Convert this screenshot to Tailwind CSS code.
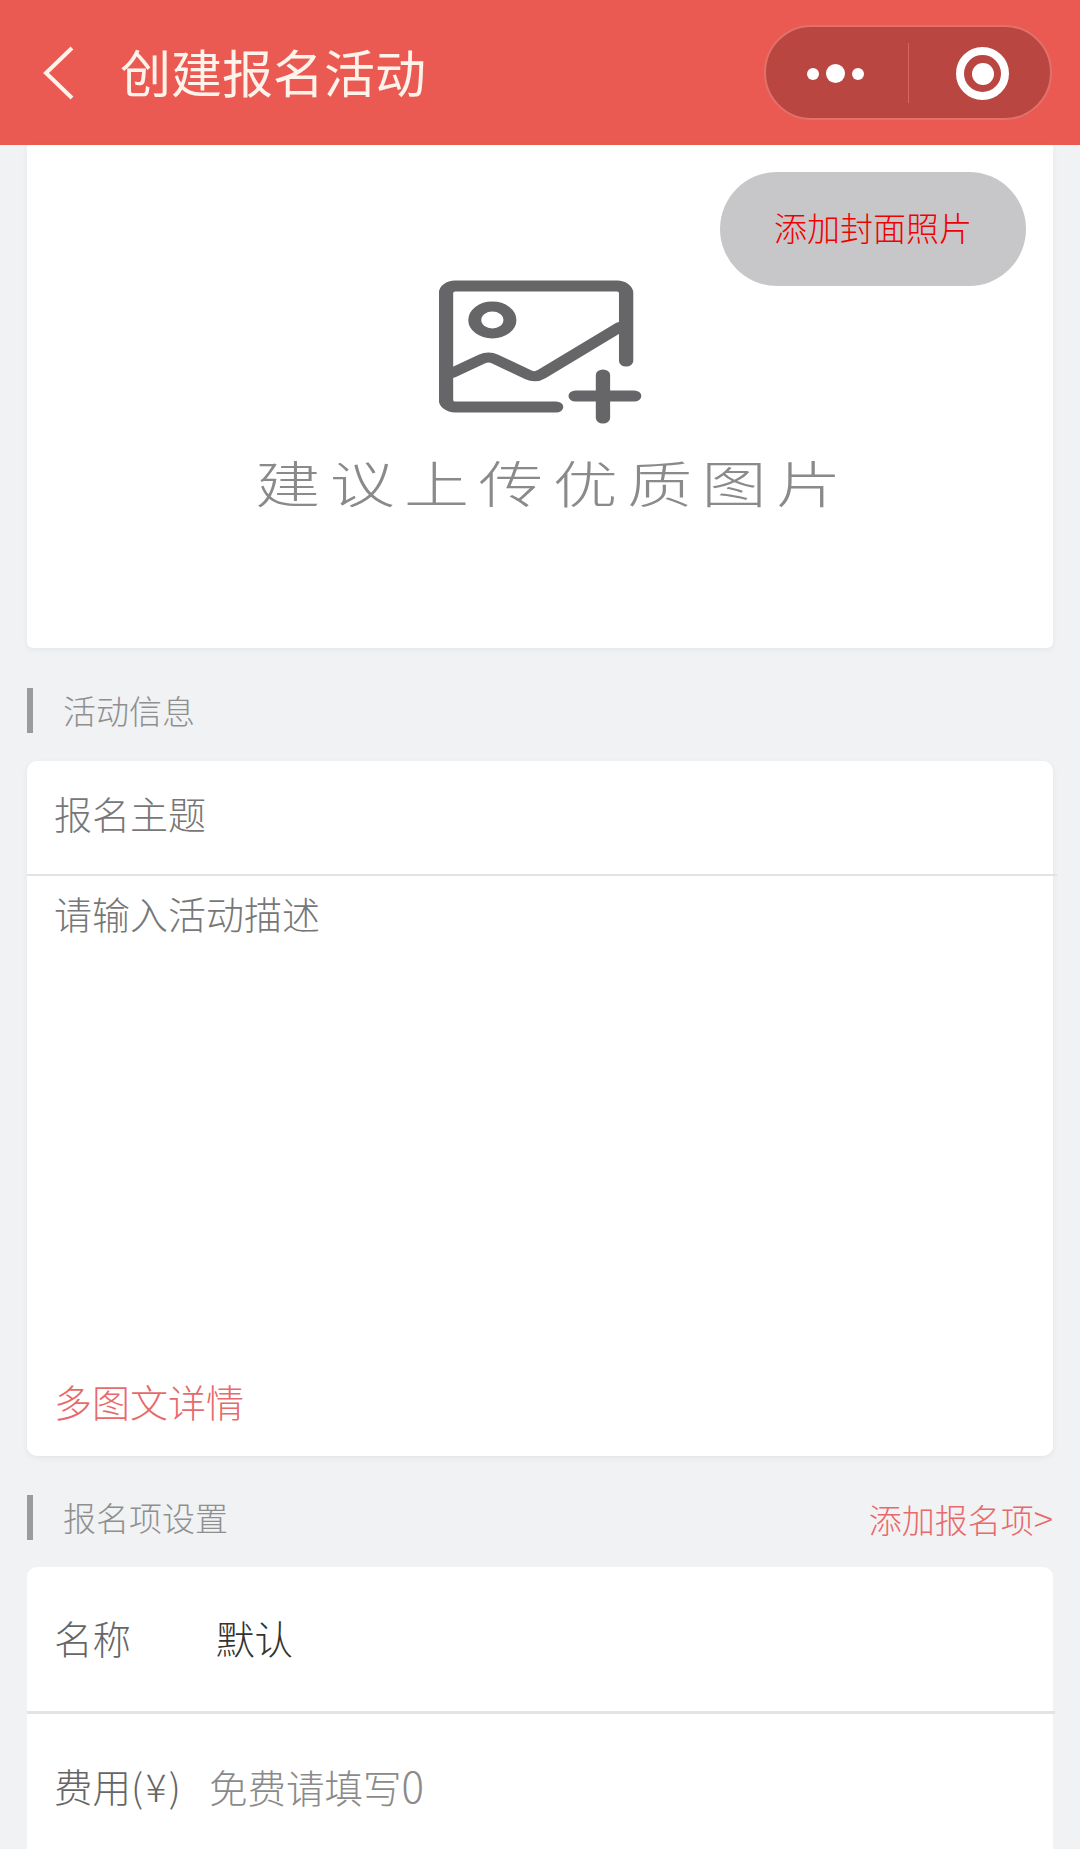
<!DOCTYPE html>
<html lang="zh">
<head>
<meta charset="utf-8">
<script src="https://cdn.jsdelivr.net/npm/@tailwindcss/browser@4"></script>
</head>
<body class="m-0">
<div class="w-[1080px] h-[1849px] overflow-hidden bg-[#f1f2f4] flex flex-col font-['Noto_Sans_CJK_SC','Noto_Sans',sans-serif]">
  <header class="h-[145px] shrink-0 bg-[#eb5a52] flex items-center">
    <svg class="ml-[41px] shrink-0" width="34" height="56" viewBox="0 0 34 56" fill="none"><polyline points="31,3 5,28 31,53" stroke="#fdf3ea" stroke-width="4"/></svg>
    <h1 class="ml-[45px] mb-[4px] text-[51px] leading-[60px] font-normal text-[#fdf3ea]">创建报名活动</h1>
    <div class="ml-auto mr-[28px] w-[288px] h-[95px] rounded-full bg-[#b94640] border-2 border-[#e2716a] flex items-center box-border">
      <div class="flex-1 flex items-center justify-center gap-[7px] pt-[2px] pr-[4px]">
        <span class="w-[12px] h-[12px] rounded-full bg-white"></span>
        <span class="w-[19px] h-[19px] rounded-full bg-white"></span>
        <span class="w-[12px] h-[12px] rounded-full bg-white"></span>
      </div>
      <div class="w-[1px] h-[60px] bg-[#d8655e]"></div>
      <div class="w-[141px] pl-[6px] pt-[2px] flex items-center justify-center">
        <span class="w-[53px] h-[53px] rounded-full border-[8px] border-white flex items-center justify-center box-border">
          <span class="w-[22px] h-[22px] rounded-full bg-white"></span>
        </span>
      </div>
    </div>
  </header>
  <main class="flex-1 px-[27px] flex flex-col">
    <section class="relative h-[503px] shrink-0 bg-white rounded-b-[6px] shadow-[0_2px_6px_rgba(0,0,0,0.05)] flex flex-col items-center pt-[135px]">
      <button class="absolute top-[27px] right-[27px] w-[306px] h-[114px] rounded-[57px] bg-[#c7c7c9] text-[#f00000] text-[33px] leading-[40px] font-light pb-[4px]">添加封面照片</button>
      <svg width="203" height="144" viewBox="0 0 156 144" preserveAspectRatio="none" fill="none" stroke="#666668" stroke-linecap="round" stroke-linejoin="round">
        <path d="M143.8 81V13a7 7 0 0 0-7-7H12.4a7 7 0 0 0-7 7v107a7 7 0 0 0 7 7H90" stroke-width="11"/>
        <path d="M10 93L33 79q5-3 10 0l26 16q5 3 10-1l60-47" stroke-width="10"/>
        <circle cx="41" cy="40" r="13.5" stroke-width="10"/>
        <path d="M105 116H150M126 95V138" stroke-width="11"/>
      </svg>
      <p class="mt-[27px] ml-[26px] text-[50px] leading-[60px] font-light tracking-[7.2px] text-[#8a8a8a] whitespace-nowrap scale-x-[1.3]">建议上传优质图片</p>
    </section>

    <div class="h-[113px] shrink-0 flex items-start pt-[40px]">
      <span class="w-[6px] h-[45px] bg-[#9b9b9d]"></span>
      <h2 class="ml-[30px] text-[33px] leading-[45px] font-light text-[#8f8f8f]">活动信息</h2>
    </div>

    <section class="h-[695px] shrink-0 bg-white rounded-[10px] shadow-[0_2px_6px_rgba(0,0,0,0.06)] flex flex-col">
      <div class="h-[115px] shrink-0 border-b-2 border-[#e3e3e5] flex items-center pl-[27px] pb-[9px] text-[38px] leading-[50px] font-light text-[#777777] box-border -mr-[4px]">报名主题</div>
      <div class="flex-1 flex flex-col justify-between px-[27px] pt-[12px] pb-[30px] text-[38px] leading-[50px] font-light">
        <p class="text-[#777777]">请输入活动描述</p>
        <p class="text-[#e8696b]">多图文详情</p>
      </div>
    </section>

    <div class="h-[111px] shrink-0 flex items-start pt-[39px]">
      <span class="w-[6px] h-[45px] bg-[#9b9b9d]"></span>
      <h2 class="ml-[30px] text-[33px] leading-[45px] font-light text-[#8f8f8f]">报名项设置</h2>
      <a class="ml-auto text-[33px] leading-[45px] font-light text-[#e8696b]">添加报名项<span class="text-[36px]">&gt;</span></a>
    </div>

    <section class="flex-1 bg-white rounded-t-[10px] flex flex-col text-[38.5px] leading-[50px] font-light">
      <div class="h-[147px] shrink-0 border-b-[3px] border-[#e3e3e5] flex items-center pl-[27px] pb-[4px] -mr-[2px] box-border text-[#666666]">
        <span class="w-[162px]">名称</span>
        <span class="text-[#333333]">默认</span>
      </div>
      <div class="flex-1 flex items-start pl-[27px] pt-[46px] text-[#666666]">
        <span class="w-[155px]">费用<span class="tracking-[2.5px]">(¥)</span></span>
        <span class="text-[#8a8a8a]">免费请填写<span class="text-[42px]">0</span></span>
      </div>
    </section>
  </main>
</div>
</body>
</html>
